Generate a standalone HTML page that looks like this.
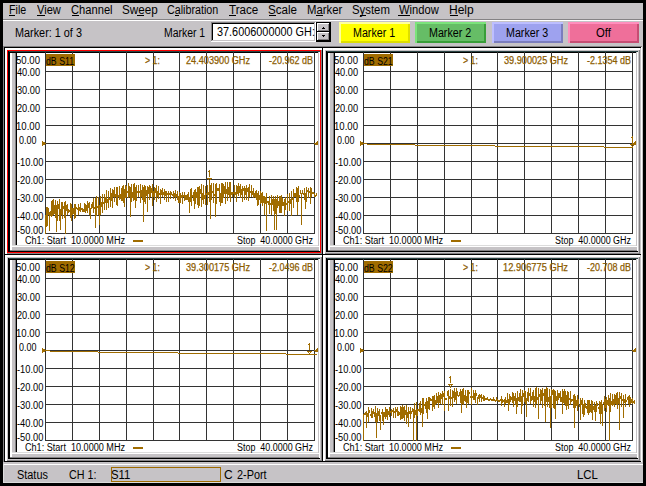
<!DOCTYPE html>
<html><head><meta charset="utf-8"><style>
html,body{margin:0;padding:0;background:#000;}
body{width:646px;height:486px;background:#000;position:relative;overflow:hidden;font-family:"Liberation Sans", sans-serif;}
div,span{position:absolute;}
span{white-space:nowrap;line-height:1;transform-origin:0 0;}
</style></head><body>
<div style="left:3px;top:3px;width:640px;height:480px;background:#c6c3c6;"></div><div style="left:3px;top:19px;width:640px;height:1px;background:#848284;"></div><div style="left:3px;top:20px;width:640px;height:1px;background:#ffffff;"></div><span style="left:9.11px;top:4px;font-size:12px;color:#000;transform:scaleX(0.8889);">File</span><span style="left:37.00px;top:4px;font-size:12px;color:#000;transform:scaleX(0.9231);">View</span><span style="left:71.07px;top:4px;font-size:12px;color:#000;transform:scaleX(0.9302);">Channel</span><span style="left:122.03px;top:4px;font-size:12px;color:#000;transform:scaleX(0.9714);">Sweep</span><span style="left:167.11px;top:4px;font-size:12px;color:#000;transform:scaleX(0.8929);">Calibration</span><span style="left:229.00px;top:4px;font-size:12px;color:#000;transform:scaleX(0.9667);">Trace</span><span style="left:268.03px;top:4px;font-size:12px;color:#000;transform:scaleX(0.9655);">Scale</span><span style="left:307.06px;top:4px;font-size:12px;color:#000;transform:scaleX(0.9444);">Marker</span><span style="left:352.05px;top:4px;font-size:12px;color:#000;transform:scaleX(0.9474);">System</span><span style="left:399.00px;top:4px;font-size:12px;color:#000;transform:scaleX(0.9302);">Window</span><span style="left:449.00px;top:4px;font-size:12px;color:#000;transform:scaleX(1.0000);">Help</span><div style="left:9px;top:15px;width:6px;height:1px;background:#000;"></div><div style="left:37px;top:15px;width:8px;height:1px;background:#000;"></div><div style="left:72px;top:15px;width:7px;height:1px;background:#000;"></div><div style="left:137px;top:15px;width:7px;height:1px;background:#000;"></div><div style="left:175px;top:15px;width:4px;height:1px;background:#000;"></div><div style="left:229px;top:15px;width:7px;height:1px;background:#000;"></div><div style="left:269px;top:15px;width:7px;height:1px;background:#000;"></div><div style="left:316px;top:15px;width:7px;height:1px;background:#000;"></div><div style="left:360px;top:15px;width:6px;height:1px;background:#000;"></div><div style="left:398px;top:15px;width:12px;height:1px;background:#000;"></div><div style="left:450px;top:15px;width:8px;height:1px;background:#000;"></div><span style="left:15.10px;top:27px;font-size:12px;color:#000;transform:scaleX(0.9041);">Marker: 1 of 3</span><span style="left:164.13px;top:27px;font-size:12px;color:#000;transform:scaleX(0.8696);">Marker 1</span><div style="left:211px;top:22px;width:105px;height:1px;background:#848284;"></div><div style="left:211px;top:22px;width:1px;height:20px;background:#848284;"></div><div style="left:212px;top:23px;width:103px;height:1px;background:#000;"></div><div style="left:212px;top:23px;width:1px;height:18px;background:#000;"></div><div style="left:211px;top:41px;width:105px;height:1px;background:#ffffff;"></div><div style="left:315px;top:22px;width:1px;height:20px;background:#ffffff;"></div><div style="left:212px;top:40px;width:103px;height:1px;background:#c6c3c6;"></div><div style="left:314px;top:23px;width:1px;height:18px;background:#c6c3c6;"></div><div style="left:213px;top:24px;width:101px;height:16px;background:#ffffff;"></div><span style="left:217.09px;top:26px;font-size:12px;color:#000;transform:scaleX(0.9057);">37.6006000000 GH:</span><div style="left:316px;top:22px;width:15px;height:20px;background:#000;"></div><div style="left:317px;top:23px;width:12px;height:8px;background:#c6c3c6;box-shadow: inset 1px 1px 0 #fff, inset -1px -1px 0 #848284;"></div><div style="left:317px;top:32px;width:12px;height:8px;background:#c6c3c6;box-shadow: inset 1px 1px 0 #fff, inset -1px -1px 0 #848284;"></div><svg style="position:absolute;left:317px;top:22px" width="14" height="20"><path d="M5 6h3v1h-3zM6 5h1v1h-1z" fill="#000"/><path d="M5 13h3v1h-3zM6 14h1v1h-1z" fill="#000"/></svg><div style="left:339px;top:22px;width:71px;height:21px;background:#ffff00;box-shadow: inset 2px 2px 0 #ffff9c, inset -2px -2px 0 #dede00;"></div><span style="left:353.11px;top:27px;font-size:12px;color:#000;transform:scaleX(0.8913);">Marker 1</span><div style="left:415px;top:22px;width:71px;height:21px;background:#66bd66;box-shadow: inset 2px 2px 0 #7be37b, inset -2px -2px 0 #399e39;"></div><span style="left:429.11px;top:27px;font-size:12px;color:#000;transform:scaleX(0.8913);">Marker 2</span><div style="left:492px;top:22px;width:71px;height:21px;background:#9ea2ef;box-shadow: inset 2px 2px 0 #bdbeff, inset -2px -2px 0 #7b7dbd;"></div><span style="left:506.11px;top:27px;font-size:12px;color:#000;transform:scaleX(0.8913);">Marker 3</span><div style="left:568px;top:22px;width:71px;height:21px;background:#ef6f9a;box-shadow: inset 2px 2px 0 #ff8ebd, inset -2px -2px 0 #c64d73;"></div><span style="left:596.00px;top:27px;font-size:12px;color:#000;transform:scaleX(0.9375);">Off</span><div style="left:3px;top:46px;width:640px;height:1px;background:#848284;"></div><div style="left:3px;top:46px;width:1px;height:418px;background:#848284;"></div><div style="left:641px;top:47px;width:1px;height:415px;background:#ffffff;"></div><div style="left:642px;top:46px;width:1px;height:418px;background:#c6c3c6;"></div><div style="left:4px;top:47px;width:319px;height:1px;background:#000;"></div><div style="left:4px;top:47px;width:1px;height:208px;background:#000;"></div><div style="left:5px;top:48px;width:317px;height:206px;background:#c6c3c6;"></div><div style="left:5px;top:48px;width:317px;height:1px;background:#ffffff;"></div><div style="left:5px;top:49px;width:317px;height:1px;background:#ffffff;"></div><div style="left:5px;top:48px;width:1px;height:206px;background:#ffffff;"></div><div style="left:6px;top:48px;width:1px;height:206px;background:#ffffff;"></div><div style="left:7px;top:50px;width:314px;height:1px;background:#ff0000;"></div><div style="left:7px;top:252px;width:314px;height:1px;background:#ff0000;"></div><div style="left:7px;top:50px;width:1px;height:203px;background:#ff0000;"></div><div style="left:320px;top:50px;width:1px;height:203px;background:#ff0000;"></div><div style="left:8px;top:51px;width:312px;height:1px;background:#2a4444;"></div><div style="left:8px;top:51px;width:1px;height:201px;background:#000;"></div><div style="left:9px;top:52px;width:311px;height:1px;background:#000;"></div><div style="left:9px;top:52px;width:1px;height:200px;background:#000;"></div><div style="left:8px;top:251px;width:312px;height:1px;background:#000;"></div><div style="left:321px;top:50px;width:1px;height:204px;background:#848284;"></div><div style="left:7px;top:253px;width:315px;height:1px;background:#848284;"></div><div style="left:4px;top:254px;width:319px;height:1px;background:#000;"></div><div style="left:10px;top:53px;width:1px;height:198px;background:#ffffff;"></div><div style="left:11px;top:53px;width:1px;height:198px;background:#ffffff;"></div><div style="left:12px;top:53px;width:3px;height:198px;background:#c6c3c6;"></div><div style="left:15px;top:53px;width:1px;height:192px;background:#848284;"></div><div style="left:16px;top:52px;width:1px;height:193px;background:#000;"></div><div style="left:12px;top:245px;width:308px;height:1px;background:#dcdcdc;"></div><div style="left:12px;top:246px;width:308px;height:1px;background:#ffffff;"></div><div style="left:12px;top:247px;width:308px;height:3px;background:#c6c3c6;"></div><div style="left:10px;top:250px;width:310px;height:1px;background:#848284;"></div><div style="left:17px;top:53px;width:301px;height:192px;background:#ffffff;"></div><div style="left:318px;top:52px;width:1px;height:194px;background:#c6c3c6;"></div><div style="left:319px;top:52px;width:1px;height:199px;background:#ffffff;"></div><div style="left:45px;top:52px;width:1px;height:182px;background:#333333;"></div><div style="left:72px;top:52px;width:1px;height:182px;background:#333333;"></div><div style="left:99px;top:52px;width:1px;height:182px;background:#333333;"></div><div style="left:126px;top:52px;width:1px;height:182px;background:#333333;"></div><div style="left:153px;top:52px;width:1px;height:182px;background:#333333;"></div><div style="left:179px;top:52px;width:1px;height:182px;background:#333333;"></div><div style="left:206px;top:52px;width:1px;height:182px;background:#333333;"></div><div style="left:233px;top:52px;width:1px;height:182px;background:#333333;"></div><div style="left:260px;top:52px;width:1px;height:182px;background:#333333;"></div><div style="left:287px;top:52px;width:1px;height:182px;background:#333333;"></div><div style="left:314px;top:52px;width:1px;height:182px;background:#333333;"></div><div style="left:45px;top:71px;width:270px;height:1px;background:#333333;"></div><div style="left:45px;top:89px;width:270px;height:1px;background:#333333;"></div><div style="left:45px;top:107px;width:270px;height:1px;background:#333333;"></div><div style="left:45px;top:125px;width:270px;height:1px;background:#333333;"></div><div style="left:45px;top:143px;width:270px;height:1px;background:#333333;"></div><div style="left:45px;top:161px;width:270px;height:1px;background:#333333;"></div><div style="left:45px;top:179px;width:270px;height:1px;background:#333333;"></div><div style="left:45px;top:197px;width:270px;height:1px;background:#333333;"></div><div style="left:45px;top:215px;width:270px;height:1px;background:#333333;"></div><div style="left:45px;top:233px;width:270px;height:1px;background:#333333;"></div><svg style="position:absolute;left:0;top:0" width="646" height="486"><path d="M45.5 215V234M46.5 207V227M47.5 207V226M48.5 208V215M49.5 212V231M50.5 211V216M51.5 201V217M52.5 200V216M53.5 199V215M54.5 205V214M55.5 200V218M56.5 205V232M57.5 201V221M58.5 204V209M59.5 199V221M60.5 209V230M61.5 202V215M62.5 202V219M63.5 206V209M64.5 202V218M65.5 201V234M66.5 205V211M67.5 204V215M68.5 209V213M69.5 210V212M70.5 203V218M71.5 204V221M72.5 208V215M73.5 208V214M74.5 204V219M75.5 204V218M76.5 207V209M77.5 208V210M78.5 204V215M79.5 207V211M80.5 203V212M81.5 208V210M82.5 208V212M83.5 209V212M84.5 203V212M85.5 204V213M86.5 205V211M87.5 201V213M88.5 203V208M89.5 202V215M90.5 208V219M91.5 204V209M92.5 202V208M93.5 198V213M94.5 207V209M95.5 198V228M96.5 196V216M97.5 206V208M98.5 197V215M99.5 205V225M100.5 196V215M101.5 202V207M102.5 194V213M103.5 202V204M104.5 194V210M105.5 197V203M106.5 190V210M107.5 199V203M108.5 191V208M109.5 198V200M110.5 188V207M111.5 193V201M112.5 189V208M113.5 190V197M114.5 187V202M115.5 194V197M116.5 187V205M117.5 187V206M118.5 195V197M119.5 186V200M120.5 194V199M121.5 188V201M122.5 186V201M123.5 185V203M124.5 189V207M125.5 185V198M126.5 186V198M127.5 191V193M128.5 183V198M129.5 186V197M130.5 187V217M131.5 184V202M132.5 192V198M133.5 184V201M134.5 183V200M135.5 187V208M136.5 185V201M137.5 191V193M138.5 185V197M139.5 191V193M140.5 184V203M141.5 190V197M142.5 185V200M143.5 187V222M144.5 185V202M145.5 186V204M146.5 190V196M147.5 186V212M148.5 187V194M149.5 185V200M150.5 186V197M151.5 188V193M152.5 184V206M153.5 191V197M154.5 187V200M155.5 188V193M156.5 185V202M157.5 191V197M158.5 186V199M159.5 193V195M160.5 189V204M161.5 190V195M162.5 188V197M163.5 192V195M164.5 189V200M165.5 191V196M166.5 191V202M167.5 193V195M168.5 191V202M169.5 193V195M170.5 191V199M171.5 192V195M172.5 194V196M173.5 191V199M174.5 193V197M175.5 190V201M176.5 194V197M177.5 191V200M178.5 196V203M179.5 192V203M180.5 193V203M181.5 195V198M182.5 192V204M183.5 195V197M184.5 192V201M185.5 195V200M186.5 195V200M187.5 194V200M188.5 192V202M189.5 197V213M190.5 189V202M191.5 188V206M192.5 195V197M193.5 192V201M194.5 190V209M195.5 189V204M196.5 192V198M197.5 187V205M198.5 187V208M199.5 186V206M200.5 189V194M201.5 184V207M202.5 193V200M203.5 185V204M204.5 195V199M205.5 186V205M206.5 193V195M207.5 185V205M208.5 192V195M209.5 182V202M210.5 185V219M211.5 183V200M212.5 191V193M213.5 183V203M214.5 194V196M215.5 184V217M216.5 183V204M217.5 188V191M218.5 188V191M219.5 184V202M220.5 193V206M221.5 183V203M222.5 183V203M223.5 184V198M224.5 186V194M225.5 182V204M226.5 189V194M227.5 182V201M228.5 187V195M229.5 182V198M230.5 182V202M231.5 192V195M232.5 192V197M233.5 192V194M234.5 185V198M235.5 192V195M236.5 185V202M237.5 186V194M238.5 183V196M239.5 186V193M240.5 184V198M241.5 189V195M242.5 186V202M243.5 188V191M244.5 186V200M245.5 188V195M246.5 185V200M247.5 188V192M248.5 187V201M249.5 184V197M250.5 191V193M251.5 185V197M252.5 191V195M253.5 188V198M254.5 193V197M255.5 191V198M256.5 190V200M257.5 193V206M258.5 191V205M259.5 195V200M260.5 191V204M261.5 193V203M262.5 192V206M263.5 196V203M264.5 196V215M265.5 197V204M266.5 193V231M267.5 201V203M268.5 201V205M269.5 196V214M270.5 203V205M271.5 195V215M272.5 199V205M273.5 196V211M274.5 199V230M275.5 196V214M276.5 199V230M277.5 195V208M278.5 201V206M279.5 196V213M280.5 196V213M281.5 195V213M282.5 198V206M283.5 202V206M284.5 199V216M285.5 197V210M286.5 203V205M287.5 194V211M288.5 201V203M289.5 193V211M290.5 199V204M291.5 191V216M292.5 198V200M293.5 189V208M294.5 193V197M295.5 193V197M296.5 187V202M297.5 188V215M298.5 186V202M299.5 195V197M300.5 190V194M301.5 193V225M302.5 190V194M303.5 193V195M304.5 188V200M305.5 193V209M306.5 187V202M307.5 190V192M308.5 188V198M309.5 191V193M310.5 187V204M311.5 188V197M312.5 192V194M313.5 192V194M314.5 193V197M315.5 195V197M316.5 193V196" stroke="#a06c00" stroke-width="1" fill="none" shape-rendering="crispEdges"/></svg><span style="left:16.04px;top:56px;font-size:10px;color:#000;transform:scaleX(0.9583);">50.00</span><span style="left:17.00px;top:68px;font-size:10px;color:#000;transform:scaleX(0.9200);">40.00</span><span style="left:17.00px;top:86px;font-size:10px;color:#000;transform:scaleX(0.9200);">30.00</span><span style="left:17.00px;top:104px;font-size:10px;color:#000;transform:scaleX(0.9200);">20.00</span><span style="left:16.04px;top:122px;font-size:10px;color:#000;transform:scaleX(0.9583);">10.00</span><span style="left:19.00px;top:136px;font-size:10px;color:#000;transform:scaleX(0.8947);">0.00</span><span style="left:17.00px;top:158px;font-size:10px;color:#000;transform:scaleX(0.9286);">-10.00</span><span style="left:17.00px;top:176px;font-size:10px;color:#000;transform:scaleX(0.9286);">-20.00</span><span style="left:17.00px;top:194px;font-size:10px;color:#000;transform:scaleX(0.9286);">-30.00</span><span style="left:17.00px;top:212px;font-size:10px;color:#000;transform:scaleX(0.9286);">-40.00</span><span style="left:17.00px;top:226px;font-size:10px;color:#000;transform:scaleX(0.9286);">-50.00</span><div style="left:46px;top:54px;width:29px;height:12px;background:#a06c00;"></div><span style="left:46.00px;top:57px;font-size:10px;color:#000;transform:scaleX(0.8750);">dB S11</span><span style="left:145.00px;top:56px;font-size:10px;color:#8c5c00;transform:scaleX(0.8750);-webkit-text-stroke:0.25px #8c5c00;">&gt; 1:</span><span style="left:186.00px;top:56px;font-size:10px;color:#8c5c00;transform:scaleX(0.9143);-webkit-text-stroke:0.25px #8c5c00;">24.403900 GHz</span><span style="left:269.00px;top:56px;font-size:10px;color:#8c5c00;transform:scaleX(0.8980);-webkit-text-stroke:0.25px #8c5c00;">-20.962 dB</span><span style="left:25.00px;top:236px;font-size:10px;color:#000;transform:scaleX(0.9091);">Ch1: Start&nbsp; 10.0000 MHz</span><div style="left:133px;top:240px;width:10px;height:2px;background:#a06c00;"></div><span style="left:237.11px;top:236px;font-size:10px;color:#000;transform:scaleX(0.8929);">Stop&nbsp; 40.0000 GHz</span><svg style="position:absolute;left:0;top:0" width="646" height="486"><path d="M42 141h1v5h-1zM43 142h2v3h-2zM45 143h1v1h-1z" fill="#a06c00"/><path d="M317 141h1v4h-1zM316 142h1v3h-1zM315 143h1v2h-1zM314 143h1v1h-1z" fill="#a06c00"/><path d="M209 170h1v7h-1zM208 171h1v1h-1z" fill="#a06c00"/><path d="M207 178h5v1h-5zM208 179h1v1h-1zM210 179h1v1h-1zM209 180h1v2h-1z" fill="#a06c00"/></svg><div style="left:322px;top:47px;width:319px;height:1px;background:#000;"></div><div style="left:322px;top:47px;width:1px;height:208px;background:#000;"></div><div style="left:323px;top:48px;width:317px;height:206px;background:#c6c3c6;"></div><div style="left:323px;top:48px;width:317px;height:1px;background:#ffffff;"></div><div style="left:323px;top:49px;width:317px;height:1px;background:#ffffff;"></div><div style="left:323px;top:48px;width:1px;height:206px;background:#ffffff;"></div><div style="left:324px;top:48px;width:1px;height:206px;background:#ffffff;"></div><div style="left:325px;top:50px;width:314px;height:1px;background:#c6c3c6;"></div><div style="left:325px;top:252px;width:314px;height:1px;background:#c6c3c6;"></div><div style="left:325px;top:50px;width:1px;height:203px;background:#c6c3c6;"></div><div style="left:638px;top:50px;width:1px;height:203px;background:#c6c3c6;"></div><div style="left:326px;top:51px;width:312px;height:1px;background:#2a4444;"></div><div style="left:326px;top:51px;width:1px;height:201px;background:#000;"></div><div style="left:327px;top:52px;width:311px;height:1px;background:#000;"></div><div style="left:327px;top:52px;width:1px;height:200px;background:#000;"></div><div style="left:326px;top:251px;width:312px;height:1px;background:#000;"></div><div style="left:639px;top:50px;width:1px;height:204px;background:#848284;"></div><div style="left:325px;top:253px;width:315px;height:1px;background:#848284;"></div><div style="left:322px;top:254px;width:319px;height:1px;background:#000;"></div><div style="left:328px;top:53px;width:1px;height:198px;background:#ffffff;"></div><div style="left:329px;top:53px;width:1px;height:198px;background:#ffffff;"></div><div style="left:330px;top:53px;width:3px;height:198px;background:#c6c3c6;"></div><div style="left:333px;top:53px;width:1px;height:192px;background:#848284;"></div><div style="left:334px;top:52px;width:1px;height:193px;background:#000;"></div><div style="left:330px;top:245px;width:308px;height:1px;background:#dcdcdc;"></div><div style="left:330px;top:246px;width:308px;height:1px;background:#ffffff;"></div><div style="left:330px;top:247px;width:308px;height:3px;background:#c6c3c6;"></div><div style="left:328px;top:250px;width:310px;height:1px;background:#848284;"></div><div style="left:335px;top:53px;width:301px;height:192px;background:#ffffff;"></div><div style="left:636px;top:52px;width:1px;height:194px;background:#c6c3c6;"></div><div style="left:637px;top:52px;width:1px;height:199px;background:#ffffff;"></div><div style="left:363px;top:52px;width:1px;height:182px;background:#333333;"></div><div style="left:390px;top:52px;width:1px;height:182px;background:#333333;"></div><div style="left:417px;top:52px;width:1px;height:182px;background:#333333;"></div><div style="left:444px;top:52px;width:1px;height:182px;background:#333333;"></div><div style="left:471px;top:52px;width:1px;height:182px;background:#333333;"></div><div style="left:497px;top:52px;width:1px;height:182px;background:#333333;"></div><div style="left:524px;top:52px;width:1px;height:182px;background:#333333;"></div><div style="left:551px;top:52px;width:1px;height:182px;background:#333333;"></div><div style="left:578px;top:52px;width:1px;height:182px;background:#333333;"></div><div style="left:605px;top:52px;width:1px;height:182px;background:#333333;"></div><div style="left:632px;top:52px;width:1px;height:182px;background:#333333;"></div><div style="left:363px;top:71px;width:270px;height:1px;background:#333333;"></div><div style="left:363px;top:89px;width:270px;height:1px;background:#333333;"></div><div style="left:363px;top:107px;width:270px;height:1px;background:#333333;"></div><div style="left:363px;top:125px;width:270px;height:1px;background:#333333;"></div><div style="left:363px;top:143px;width:270px;height:1px;background:#333333;"></div><div style="left:363px;top:161px;width:270px;height:1px;background:#333333;"></div><div style="left:363px;top:179px;width:270px;height:1px;background:#333333;"></div><div style="left:363px;top:197px;width:270px;height:1px;background:#333333;"></div><div style="left:363px;top:215px;width:270px;height:1px;background:#333333;"></div><div style="left:363px;top:233px;width:270px;height:1px;background:#333333;"></div><svg style="position:absolute;left:0;top:0" width="646" height="486"><path d="M363 143.5H367M367 144.5H415M415 145.5H495M495 146.5H604M604 147.5H633" stroke="#a06c00" stroke-width="1" fill="none" shape-rendering="crispEdges"/></svg><span style="left:334.04px;top:56px;font-size:10px;color:#000;transform:scaleX(0.9583);">50.00</span><span style="left:335.00px;top:68px;font-size:10px;color:#000;transform:scaleX(0.9200);">40.00</span><span style="left:335.00px;top:86px;font-size:10px;color:#000;transform:scaleX(0.9200);">30.00</span><span style="left:335.00px;top:104px;font-size:10px;color:#000;transform:scaleX(0.9200);">20.00</span><span style="left:334.04px;top:122px;font-size:10px;color:#000;transform:scaleX(0.9583);">10.00</span><span style="left:337.00px;top:136px;font-size:10px;color:#000;transform:scaleX(0.8947);">0.00</span><span style="left:335.00px;top:158px;font-size:10px;color:#000;transform:scaleX(0.9286);">-10.00</span><span style="left:335.00px;top:176px;font-size:10px;color:#000;transform:scaleX(0.9286);">-20.00</span><span style="left:335.00px;top:194px;font-size:10px;color:#000;transform:scaleX(0.9286);">-30.00</span><span style="left:335.00px;top:212px;font-size:10px;color:#000;transform:scaleX(0.9286);">-40.00</span><span style="left:335.00px;top:226px;font-size:10px;color:#000;transform:scaleX(0.9286);">-50.00</span><div style="left:364px;top:54px;width:29px;height:12px;background:#a06c00;"></div><span style="left:364.00px;top:57px;font-size:10px;color:#000;transform:scaleX(0.8750);">dB S21</span><span style="left:463.00px;top:56px;font-size:10px;color:#8c5c00;transform:scaleX(0.8750);-webkit-text-stroke:0.25px #8c5c00;">&gt; 1:</span><span style="left:504.00px;top:56px;font-size:10px;color:#8c5c00;transform:scaleX(0.9143);-webkit-text-stroke:0.25px #8c5c00;">39.900025 GHz</span><span style="left:587.00px;top:56px;font-size:10px;color:#8c5c00;transform:scaleX(0.8980);-webkit-text-stroke:0.25px #8c5c00;">-2.1354 dB</span><span style="left:343.00px;top:236px;font-size:10px;color:#000;transform:scaleX(0.9091);">Ch1: Start&nbsp; 10.0000 MHz</span><div style="left:451px;top:240px;width:10px;height:2px;background:#a06c00;"></div><span style="left:555.11px;top:236px;font-size:10px;color:#000;transform:scaleX(0.8929);">Stop&nbsp; 40.0000 GHz</span><svg style="position:absolute;left:0;top:0" width="646" height="486"><path d="M360 141h1v5h-1zM361 142h2v3h-2zM363 143h1v1h-1z" fill="#a06c00"/><path d="M635 141h1v4h-1zM634 142h1v3h-1zM633 143h1v2h-1zM632 143h1v1h-1z" fill="#a06c00"/><path d="M632 136h1v7h-1zM631 137h1v1h-1z" fill="#a06c00"/><path d="M630 144h5v1h-5zM631 145h1v1h-1zM633 145h1v1h-1zM632 146h1v2h-1z" fill="#a06c00"/></svg><div style="left:4px;top:254px;width:319px;height:1px;background:#000;"></div><div style="left:4px;top:254px;width:1px;height:208px;background:#000;"></div><div style="left:5px;top:255px;width:317px;height:206px;background:#c6c3c6;"></div><div style="left:5px;top:255px;width:317px;height:1px;background:#ffffff;"></div><div style="left:5px;top:256px;width:317px;height:1px;background:#ffffff;"></div><div style="left:5px;top:255px;width:1px;height:206px;background:#ffffff;"></div><div style="left:6px;top:255px;width:1px;height:206px;background:#ffffff;"></div><div style="left:7px;top:257px;width:314px;height:1px;background:#c6c3c6;"></div><div style="left:7px;top:459px;width:314px;height:1px;background:#c6c3c6;"></div><div style="left:7px;top:257px;width:1px;height:203px;background:#c6c3c6;"></div><div style="left:320px;top:257px;width:1px;height:203px;background:#c6c3c6;"></div><div style="left:8px;top:258px;width:312px;height:1px;background:#2a4444;"></div><div style="left:8px;top:258px;width:1px;height:201px;background:#000;"></div><div style="left:9px;top:259px;width:311px;height:1px;background:#000;"></div><div style="left:9px;top:259px;width:1px;height:200px;background:#000;"></div><div style="left:8px;top:458px;width:312px;height:1px;background:#000;"></div><div style="left:321px;top:257px;width:1px;height:204px;background:#848284;"></div><div style="left:7px;top:460px;width:315px;height:1px;background:#848284;"></div><div style="left:4px;top:461px;width:319px;height:1px;background:#000;"></div><div style="left:10px;top:260px;width:1px;height:198px;background:#ffffff;"></div><div style="left:11px;top:260px;width:1px;height:198px;background:#ffffff;"></div><div style="left:12px;top:260px;width:3px;height:198px;background:#c6c3c6;"></div><div style="left:15px;top:260px;width:1px;height:192px;background:#848284;"></div><div style="left:16px;top:259px;width:1px;height:193px;background:#000;"></div><div style="left:12px;top:452px;width:308px;height:1px;background:#dcdcdc;"></div><div style="left:12px;top:453px;width:308px;height:1px;background:#ffffff;"></div><div style="left:12px;top:454px;width:308px;height:3px;background:#c6c3c6;"></div><div style="left:10px;top:457px;width:310px;height:1px;background:#848284;"></div><div style="left:17px;top:260px;width:301px;height:192px;background:#ffffff;"></div><div style="left:318px;top:259px;width:1px;height:194px;background:#c6c3c6;"></div><div style="left:319px;top:259px;width:1px;height:199px;background:#ffffff;"></div><div style="left:45px;top:259px;width:1px;height:182px;background:#333333;"></div><div style="left:72px;top:259px;width:1px;height:182px;background:#333333;"></div><div style="left:99px;top:259px;width:1px;height:182px;background:#333333;"></div><div style="left:126px;top:259px;width:1px;height:182px;background:#333333;"></div><div style="left:153px;top:259px;width:1px;height:182px;background:#333333;"></div><div style="left:179px;top:259px;width:1px;height:182px;background:#333333;"></div><div style="left:206px;top:259px;width:1px;height:182px;background:#333333;"></div><div style="left:233px;top:259px;width:1px;height:182px;background:#333333;"></div><div style="left:260px;top:259px;width:1px;height:182px;background:#333333;"></div><div style="left:287px;top:259px;width:1px;height:182px;background:#333333;"></div><div style="left:314px;top:259px;width:1px;height:182px;background:#333333;"></div><div style="left:45px;top:278px;width:270px;height:1px;background:#333333;"></div><div style="left:45px;top:296px;width:270px;height:1px;background:#333333;"></div><div style="left:45px;top:314px;width:270px;height:1px;background:#333333;"></div><div style="left:45px;top:332px;width:270px;height:1px;background:#333333;"></div><div style="left:45px;top:350px;width:270px;height:1px;background:#333333;"></div><div style="left:45px;top:368px;width:270px;height:1px;background:#333333;"></div><div style="left:45px;top:386px;width:270px;height:1px;background:#333333;"></div><div style="left:45px;top:404px;width:270px;height:1px;background:#333333;"></div><div style="left:45px;top:422px;width:270px;height:1px;background:#333333;"></div><div style="left:45px;top:440px;width:270px;height:1px;background:#333333;"></div><svg style="position:absolute;left:0;top:0" width="646" height="486"><path d="M45 350.5H50M50 351.5H98M98 352.5H178M178 353.5H286M286 354.5H317" stroke="#a06c00" stroke-width="1" fill="none" shape-rendering="crispEdges"/></svg><span style="left:16.04px;top:263px;font-size:10px;color:#000;transform:scaleX(0.9583);">50.00</span><span style="left:17.00px;top:275px;font-size:10px;color:#000;transform:scaleX(0.9200);">40.00</span><span style="left:17.00px;top:293px;font-size:10px;color:#000;transform:scaleX(0.9200);">30.00</span><span style="left:17.00px;top:311px;font-size:10px;color:#000;transform:scaleX(0.9200);">20.00</span><span style="left:16.04px;top:329px;font-size:10px;color:#000;transform:scaleX(0.9583);">10.00</span><span style="left:19.00px;top:343px;font-size:10px;color:#000;transform:scaleX(0.8947);">0.00</span><span style="left:17.00px;top:365px;font-size:10px;color:#000;transform:scaleX(0.9286);">-10.00</span><span style="left:17.00px;top:383px;font-size:10px;color:#000;transform:scaleX(0.9286);">-20.00</span><span style="left:17.00px;top:401px;font-size:10px;color:#000;transform:scaleX(0.9286);">-30.00</span><span style="left:17.00px;top:419px;font-size:10px;color:#000;transform:scaleX(0.9286);">-40.00</span><span style="left:17.00px;top:433px;font-size:10px;color:#000;transform:scaleX(0.9286);">-50.00</span><div style="left:46px;top:261px;width:29px;height:12px;background:#a06c00;"></div><span style="left:46.00px;top:264px;font-size:10px;color:#000;transform:scaleX(0.8750);">dB S12</span><span style="left:145.00px;top:263px;font-size:10px;color:#8c5c00;transform:scaleX(0.8750);-webkit-text-stroke:0.25px #8c5c00;">&gt; 1:</span><span style="left:186.00px;top:263px;font-size:10px;color:#8c5c00;transform:scaleX(0.9143);-webkit-text-stroke:0.25px #8c5c00;">39.300175 GHz</span><span style="left:269.00px;top:263px;font-size:10px;color:#8c5c00;transform:scaleX(0.8980);-webkit-text-stroke:0.25px #8c5c00;">-2.0496 dB</span><span style="left:25.00px;top:443px;font-size:10px;color:#000;transform:scaleX(0.9091);">Ch1: Start&nbsp; 10.0000 MHz</span><div style="left:133px;top:447px;width:10px;height:2px;background:#a06c00;"></div><span style="left:237.11px;top:443px;font-size:10px;color:#000;transform:scaleX(0.8929);">Stop&nbsp; 40.0000 GHz</span><svg style="position:absolute;left:0;top:0" width="646" height="486"><path d="M42 348h1v5h-1zM43 349h2v3h-2zM45 350h1v1h-1z" fill="#a06c00"/><path d="M317 348h1v4h-1zM316 349h1v3h-1zM315 350h1v2h-1zM314 350h1v1h-1z" fill="#a06c00"/><path d="M309 343h1v7h-1zM308 344h1v1h-1z" fill="#a06c00"/><path d="M307 351h5v1h-5zM308 352h1v1h-1zM310 352h1v1h-1zM309 353h1v2h-1z" fill="#a06c00"/></svg><div style="left:322px;top:254px;width:319px;height:1px;background:#000;"></div><div style="left:322px;top:254px;width:1px;height:208px;background:#000;"></div><div style="left:323px;top:255px;width:317px;height:206px;background:#c6c3c6;"></div><div style="left:323px;top:255px;width:317px;height:1px;background:#ffffff;"></div><div style="left:323px;top:256px;width:317px;height:1px;background:#ffffff;"></div><div style="left:323px;top:255px;width:1px;height:206px;background:#ffffff;"></div><div style="left:324px;top:255px;width:1px;height:206px;background:#ffffff;"></div><div style="left:325px;top:257px;width:314px;height:1px;background:#c6c3c6;"></div><div style="left:325px;top:459px;width:314px;height:1px;background:#c6c3c6;"></div><div style="left:325px;top:257px;width:1px;height:203px;background:#c6c3c6;"></div><div style="left:638px;top:257px;width:1px;height:203px;background:#c6c3c6;"></div><div style="left:326px;top:258px;width:312px;height:1px;background:#2a4444;"></div><div style="left:326px;top:258px;width:1px;height:201px;background:#000;"></div><div style="left:327px;top:259px;width:311px;height:1px;background:#000;"></div><div style="left:327px;top:259px;width:1px;height:200px;background:#000;"></div><div style="left:326px;top:458px;width:312px;height:1px;background:#000;"></div><div style="left:639px;top:257px;width:1px;height:204px;background:#848284;"></div><div style="left:325px;top:460px;width:315px;height:1px;background:#848284;"></div><div style="left:322px;top:461px;width:319px;height:1px;background:#000;"></div><div style="left:328px;top:260px;width:1px;height:198px;background:#ffffff;"></div><div style="left:329px;top:260px;width:1px;height:198px;background:#ffffff;"></div><div style="left:330px;top:260px;width:3px;height:198px;background:#c6c3c6;"></div><div style="left:333px;top:260px;width:1px;height:192px;background:#848284;"></div><div style="left:334px;top:259px;width:1px;height:193px;background:#000;"></div><div style="left:330px;top:452px;width:308px;height:1px;background:#dcdcdc;"></div><div style="left:330px;top:453px;width:308px;height:1px;background:#ffffff;"></div><div style="left:330px;top:454px;width:308px;height:3px;background:#c6c3c6;"></div><div style="left:328px;top:457px;width:310px;height:1px;background:#848284;"></div><div style="left:335px;top:260px;width:301px;height:192px;background:#ffffff;"></div><div style="left:636px;top:259px;width:1px;height:194px;background:#c6c3c6;"></div><div style="left:637px;top:259px;width:1px;height:199px;background:#ffffff;"></div><div style="left:363px;top:259px;width:1px;height:182px;background:#333333;"></div><div style="left:390px;top:259px;width:1px;height:182px;background:#333333;"></div><div style="left:417px;top:259px;width:1px;height:182px;background:#333333;"></div><div style="left:444px;top:259px;width:1px;height:182px;background:#333333;"></div><div style="left:471px;top:259px;width:1px;height:182px;background:#333333;"></div><div style="left:497px;top:259px;width:1px;height:182px;background:#333333;"></div><div style="left:524px;top:259px;width:1px;height:182px;background:#333333;"></div><div style="left:551px;top:259px;width:1px;height:182px;background:#333333;"></div><div style="left:578px;top:259px;width:1px;height:182px;background:#333333;"></div><div style="left:605px;top:259px;width:1px;height:182px;background:#333333;"></div><div style="left:632px;top:259px;width:1px;height:182px;background:#333333;"></div><div style="left:363px;top:278px;width:270px;height:1px;background:#333333;"></div><div style="left:363px;top:296px;width:270px;height:1px;background:#333333;"></div><div style="left:363px;top:314px;width:270px;height:1px;background:#333333;"></div><div style="left:363px;top:332px;width:270px;height:1px;background:#333333;"></div><div style="left:363px;top:350px;width:270px;height:1px;background:#333333;"></div><div style="left:363px;top:368px;width:270px;height:1px;background:#333333;"></div><div style="left:363px;top:386px;width:270px;height:1px;background:#333333;"></div><div style="left:363px;top:404px;width:270px;height:1px;background:#333333;"></div><div style="left:363px;top:422px;width:270px;height:1px;background:#333333;"></div><div style="left:363px;top:440px;width:270px;height:1px;background:#333333;"></div><svg style="position:absolute;left:0;top:0" width="646" height="486"><path d="M363.5 414V441M364.5 413V415M365.5 412V415M366.5 411V428M367.5 413V417M368.5 407V422M369.5 410V413M370.5 414V416M371.5 408V418M372.5 411V418M373.5 409V414M374.5 412V417M375.5 406V422M376.5 413V438M377.5 408V422M378.5 411V416M379.5 409V421M380.5 415V430M381.5 412V414M382.5 409V421M383.5 412V425M384.5 412V417M385.5 407V419M386.5 409V417M387.5 409V420M388.5 411V415M389.5 407V417M390.5 411V413M391.5 409V416M392.5 410V412M393.5 408V418M394.5 411V413M395.5 407V418M396.5 409V412M397.5 407V416M398.5 411V416M399.5 412V415M400.5 406V420M401.5 407V419M402.5 405V419M403.5 407V418M404.5 406V421M405.5 410V415M406.5 405V424M407.5 412V418M408.5 407V427M409.5 411V414M410.5 407V419M411.5 411V414M412.5 408V412M413.5 409V441M414.5 403V418M415.5 410V415M416.5 402V441M417.5 409V416M418.5 409V411M419.5 403V412M420.5 401V415M421.5 408V413M422.5 398V427M423.5 398V414M424.5 404V406M425.5 402V409M426.5 398V413M427.5 401V419M428.5 397V409M429.5 397V410M430.5 398V401M431.5 399V401M432.5 396V411M433.5 396V407M434.5 395V409M435.5 400V405M436.5 393V404M437.5 396V403M438.5 392V408M439.5 395V403M440.5 393V404M441.5 394V399M442.5 391V405M443.5 393V397M444.5 391V411M445.5 398V400M446.5 398V400M447.5 391V396M448.5 390V411M449.5 396V399M450.5 389V406M451.5 397V399M452.5 390V407M453.5 391V398M454.5 388V402M455.5 392V400M456.5 388V404M457.5 391V396M458.5 395V397M459.5 392V396M460.5 389V403M461.5 391V413M462.5 389V404M463.5 388V405M464.5 395V401M465.5 390V402M466.5 396V408M467.5 390V403M468.5 390V404M469.5 392V394M470.5 396V398M471.5 388V405M472.5 396V398M473.5 390V400M474.5 393V400M475.5 390V403M476.5 393V396M477.5 397V405M478.5 395V399M479.5 394V402M480.5 395V398M481.5 394V402M482.5 397V399M483.5 395V401M484.5 396V401M485.5 398V400M486.5 398V400M487.5 397V400M488.5 399V401M489.5 399V401M490.5 398V400M491.5 399V401M492.5 399V401M493.5 397V401M494.5 399V401M495.5 400V402M496.5 397V401M497.5 399V401M498.5 400V402M499.5 400V402M500.5 399V401M501.5 396V406M502.5 399V403M503.5 400V402M504.5 399V407M505.5 397V404M506.5 400V403M507.5 393V403M508.5 399V411M509.5 394V405M510.5 396V402M511.5 397V400M512.5 392V403M513.5 393V407M514.5 396V401M515.5 393V405M516.5 398V414M517.5 391V407M518.5 397V401M519.5 393V402M520.5 389V402M521.5 396V414M522.5 390V406M523.5 393V397M524.5 390V402M525.5 391V404M526.5 398V417M527.5 392V401M528.5 388V402M529.5 393V396M530.5 388V404M531.5 396V401M532.5 392V400M533.5 390V407M534.5 396V402M535.5 388V408M536.5 387V404M537.5 397V400M538.5 388V419M539.5 394V397M540.5 389V404M541.5 390V401M542.5 388V408M543.5 393V396M544.5 389V406M545.5 389V422M546.5 387V402M547.5 388V407M548.5 397V402M549.5 389V408M550.5 396V428M551.5 389V408M552.5 390V395M553.5 389V408M554.5 390V409M555.5 391V419M556.5 396V401M557.5 390V404M558.5 393V400M559.5 393V398M560.5 391V402M561.5 397V402M562.5 389V414M563.5 391V403M564.5 389V404M565.5 391V406M566.5 395V410M567.5 391V406M568.5 392V409M569.5 398V400M570.5 391V405M571.5 399V402M572.5 399V401M573.5 395V408M574.5 394V428M575.5 396V408M576.5 400V406M577.5 395V411M578.5 399V405M579.5 405V407M580.5 398V420M581.5 400V405M582.5 398V414M583.5 404V417M584.5 400V415M585.5 403V408M586.5 406V409M587.5 400V413M588.5 400V415M589.5 400V413M590.5 405V412M591.5 400V413M592.5 401V420M593.5 406V410M594.5 402V412M595.5 405V421M596.5 401V412M597.5 403V406M598.5 407V409M599.5 401V414M600.5 402V424M601.5 400V414M602.5 404V426M603.5 402V404M604.5 396V411M605.5 399V408M606.5 397V412M607.5 400V405M608.5 395V406M609.5 398V441M610.5 393V412M611.5 401V405M612.5 394V406M613.5 399V405M614.5 394V407M615.5 395V404M616.5 393V405M617.5 392V409M618.5 398V404M619.5 392V430M620.5 396V399M621.5 393V407M622.5 399V401M623.5 395V418M624.5 399V403M625.5 394V407M626.5 400V402M627.5 397V400M628.5 396V404M629.5 395V407M630.5 397V404M631.5 399V403M632.5 398V404M633.5 401V403M634.5 400V404" stroke="#a06c00" stroke-width="1" fill="none" shape-rendering="crispEdges"/></svg><span style="left:334.04px;top:263px;font-size:10px;color:#000;transform:scaleX(0.9583);">50.00</span><span style="left:335.00px;top:275px;font-size:10px;color:#000;transform:scaleX(0.9200);">40.00</span><span style="left:335.00px;top:293px;font-size:10px;color:#000;transform:scaleX(0.9200);">30.00</span><span style="left:335.00px;top:311px;font-size:10px;color:#000;transform:scaleX(0.9200);">20.00</span><span style="left:334.04px;top:329px;font-size:10px;color:#000;transform:scaleX(0.9583);">10.00</span><span style="left:337.00px;top:343px;font-size:10px;color:#000;transform:scaleX(0.8947);">0.00</span><span style="left:335.00px;top:365px;font-size:10px;color:#000;transform:scaleX(0.9286);">-10.00</span><span style="left:335.00px;top:383px;font-size:10px;color:#000;transform:scaleX(0.9286);">-20.00</span><span style="left:335.00px;top:401px;font-size:10px;color:#000;transform:scaleX(0.9286);">-30.00</span><span style="left:335.00px;top:419px;font-size:10px;color:#000;transform:scaleX(0.9286);">-40.00</span><span style="left:335.00px;top:433px;font-size:10px;color:#000;transform:scaleX(0.9286);">-50.00</span><div style="left:364px;top:261px;width:29px;height:12px;background:#a06c00;"></div><span style="left:364.00px;top:264px;font-size:10px;color:#000;transform:scaleX(0.8750);">dB S22</span><span style="left:463.00px;top:263px;font-size:10px;color:#8c5c00;transform:scaleX(0.8750);-webkit-text-stroke:0.25px #8c5c00;">&gt; 1:</span><span style="left:503.07px;top:263px;font-size:10px;color:#8c5c00;transform:scaleX(0.9275);-webkit-text-stroke:0.25px #8c5c00;">12.906775 GHz</span><span style="left:587.00px;top:263px;font-size:10px;color:#8c5c00;transform:scaleX(0.8980);-webkit-text-stroke:0.25px #8c5c00;">-20.708 dB</span><span style="left:343.00px;top:443px;font-size:10px;color:#000;transform:scaleX(0.9091);">Ch1: Start&nbsp; 10.0000 MHz</span><div style="left:451px;top:447px;width:10px;height:2px;background:#a06c00;"></div><span style="left:555.11px;top:443px;font-size:10px;color:#000;transform:scaleX(0.8929);">Stop&nbsp; 40.0000 GHz</span><svg style="position:absolute;left:0;top:0" width="646" height="486"><path d="M360 348h1v5h-1zM361 349h2v3h-2zM363 350h1v1h-1z" fill="#a06c00"/><path d="M635 348h1v4h-1zM634 349h1v3h-1zM633 350h1v2h-1zM632 350h1v1h-1z" fill="#a06c00"/><path d="M450 376h1v7h-1zM449 377h1v1h-1z" fill="#a06c00"/><path d="M448 384h5v1h-5zM449 385h1v1h-1zM451 385h1v1h-1zM450 386h1v2h-1z" fill="#a06c00"/></svg><div style="left:3px;top:462px;width:640px;height:1px;background:#c6c3c6;"></div><div style="left:3px;top:463px;width:640px;height:1px;background:#c6c3c6;"></div><div style="left:4px;top:464px;width:639px;height:1px;background:#ffffff;"></div><div style="left:3px;top:464px;width:1px;height:19px;background:#dcdcdc;"></div><div style="left:3px;top:482px;width:640px;height:1px;background:#dcdcdc;"></div><span style="left:17.09px;top:469px;font-size:12px;color:#000;transform:scaleX(0.9091);">Status</span><span style="left:69.10px;top:469px;font-size:12px;color:#000;transform:scaleX(0.8966);">CH 1:</span><div style="left:111px;top:467px;width:110px;height:15px;background:transparent;border:1px solid #a06c00;box-sizing:border-box;"></div><span style="left:111.05px;top:469px;font-size:12px;color:#000;transform:scaleX(0.9474);">S11</span><span style="left:224.00px;top:469px;font-size:12px;color:#000;transform:scaleX(1.0000);">C</span><span style="left:237.09px;top:469px;font-size:12px;color:#000;transform:scaleX(0.9062);">2-Port</span><span style="left:577.05px;top:469px;font-size:12px;color:#000;transform:scaleX(0.9524);">LCL</span>
</body></html>
